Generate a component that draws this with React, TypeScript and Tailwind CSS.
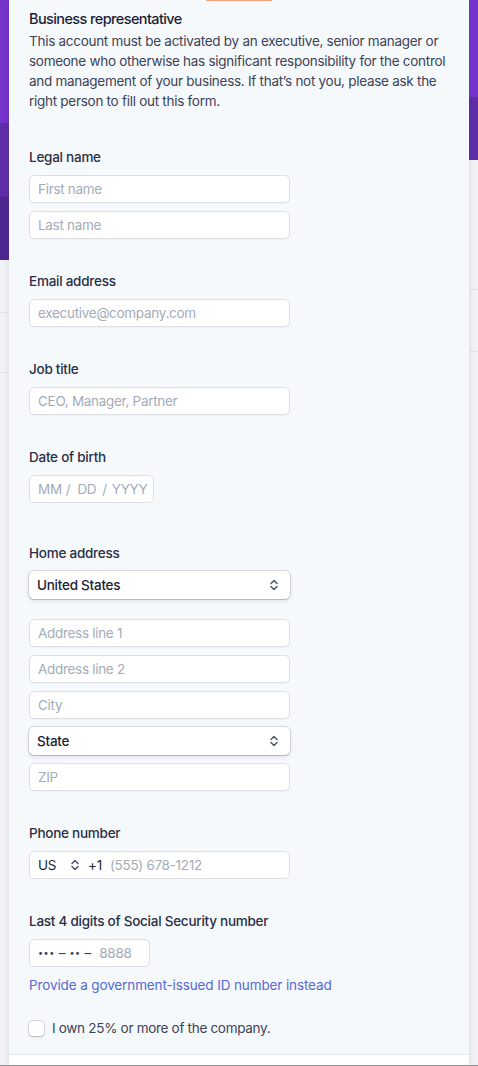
import React from 'react';

const font = { fontFamily: 'Inter, "Noto Sans", "Liberation Sans", sans-serif' };

const Chevrons: React.FC = () => (
  <svg width="8" height="12" viewBox="0 0 8 12" fill="none" className="shrink-0">
    <path d="M1 4.5L4 1.5L7 4.5M1 7.5L4 10.5L7 7.5" stroke="#4f566b" strokeWidth="1.5" strokeLinecap="round" strokeLinejoin="round" />
  </svg>
);

const Field: React.FC<{ placeholder: string }> = ({ placeholder }) => (
  <div className="w-[261px] h-[28px] flex items-center px-2 bg-white rounded-[5px] border border-[#dcdfe6] shadow-[0_1px_1px_rgba(0,0,0,0.03)] text-[13.5px] tracking-[-0.3px] text-[#a3acb9]">
    {placeholder}
  </div>
);

const Select: React.FC<{ value: string }> = ({ value }) => (
  <div className="w-[261px] h-[28px] flex items-center justify-between pl-2 pr-[12px] bg-white rounded-[5px] shadow-[0_0_0_1px_rgba(60,66,87,0.16),0_2px_5px_rgba(60,66,87,0.12),0_1px_1px_rgba(0,0,0,0.12)] text-[13.5px] tracking-[-0.25px] font-medium text-[#1a1f36]">
    <span>{value}</span>
    <Chevrons />
  </div>
);

const Label: React.FC<{ children: React.ReactNode }> = ({ children }) => (
  <div className="text-[13.5px] tracking-[-0.25px] leading-5 font-medium text-[#2a2f45] mb-2">{children}</div>
);

export default function App() {
  return (
    <div className="relative w-[478px] h-[1066px] overflow-hidden bg-[#f1f2f6]" style={font}>
      {/* background bands */}
      <div className="absolute inset-0 pointer-events-none">
        <div className="absolute left-0 top-0 w-full h-[200px] bg-[#7535cd]" />
        <div className="absolute left-[-40px] top-[122px] w-[120px] h-[76px] bg-[#5f2da8] -skew-y-3" />
        <div className="absolute left-[-40px] top-[196px] w-[120px] h-[64px] bg-[#4e2690] -skew-y-3" />
        <div className="absolute right-0 top-[97px] w-[40px] h-[63px] bg-[#5f2da8]" />
        <div className="absolute right-0 top-[160px] w-[40px] h-[60px] bg-[#f1f2f6]" />
        <div className="absolute left-0 top-[260px] w-[40px] h-[20px] bg-[#f1f2f6]" />
        <div className="absolute left-0 top-[312px] w-[30px] h-px bg-[#e2e3ea]" />
        <div className="absolute left-0 top-[372px] w-[30px] h-px bg-[#e2e3ea]" />
        <div className="absolute right-0 top-[289px] w-[30px] h-px bg-[#e2e3ea]" />
        <div className="absolute right-0 top-[351px] w-[30px] h-px bg-[#e2e3ea]" />
      </div>

      <div className="relative mx-[9px] w-[460px] h-[1065px] bg-[#f6f9fc] shadow-[0_0_6px_rgba(50,50,93,0.12)] flex flex-col">
        <div className="ml-[197px] w-[66px] h-px bg-[#f5a076]" />
        <div className="pl-5 pr-5 pt-[6px]">
          <div className="text-[14.5px] tracking-[-0.6px] leading-6 font-medium text-[#1a1f36]">Business representative</div>
          <p className="text-[13.5px] tracking-[-0.28px] leading-5 text-[#3c4257]">
            This account must be activated by an executive, senior manager or someone who otherwise has significant responsibility for the control and management of your business. If that’s not you, please ask the right person to fill out this form.
          </p>

          <div className="mt-9">
            <Label>Legal name</Label>
            <div className="flex flex-col gap-2">
              <Field placeholder="First name" />
              <Field placeholder="Last name" />
            </div>
          </div>

          <div className="mt-8">
            <Label>Email address</Label>
            <Field placeholder="executive@company.com" />
          </div>

          <div className="mt-8">
            <Label>Job title</Label>
            <Field placeholder="CEO, Manager, Partner" />
          </div>

          <div className="mt-8">
            <Label>Date of birth</Label>
            <div className="w-[125px] h-[28px] flex items-center px-2 bg-white rounded-[5px] border border-[#dcdfe6] text-[13.5px] tracking-[-0.3px] text-[#a3acb9]">
              <span>MM</span>
              <span className="ml-[4px]">/</span>
              <span className="ml-[7px]">DD</span>
              <span className="ml-[6px]">/</span>
              <span className="ml-[5px]">YYYY</span>
            </div>
          </div>

          <div className="mt-10">
            <Label>Home address</Label>
            <Select value="United States" />
            <div className="mt-5 flex flex-col gap-2">
              <Field placeholder="Address line 1" />
              <Field placeholder="Address line 2" />
              <Field placeholder="City" />
              <Select value="State" />
              <Field placeholder="ZIP" />
            </div>
          </div>

          <div className="mt-8">
            <Label>Phone number</Label>
            <div className="w-[261px] h-[28px] flex items-center px-2 bg-white rounded-[5px] border border-[#dcdfe6] text-[13.5px] tracking-[-0.3px]">
              <span className="text-[#1a1f36]">US</span>
              <span className="ml-[15px]"><Chevrons /></span>
              <span className="ml-[9px] text-[#1a1f36]">+1</span>
              <span className="ml-[8px] text-[#a3acb9]">(555) 678-1212</span>
            </div>
          </div>

          <div className="mt-8">
            <Label>Last 4 digits of Social Security number</Label>
            <div className="w-[121px] h-[28px] flex items-center px-2 bg-white rounded-[5px] border border-[#dcdfe6] text-[13.5px]">
              <span className="text-[#3c4257] flex items-center">
                <span className="text-[9px] tracking-[0.5px]">•••</span>
                <span className="ml-[4px]">–</span>
                <span className="ml-[4px] text-[9px] tracking-[0.5px]">••</span>
                <span className="ml-[4px]">–</span>
              </span>
              <span className="ml-[8px] text-[#a3acb9] tracking-[-0.3px]">8888</span>
            </div>
            <div className="mt-2 text-[13.5px] tracking-[-0.12px] leading-5 text-[#5469d4]">Provide a government-issued ID number instead</div>
          </div>

          <div className="mt-[23px] flex items-center gap-2 pb-4">
            <div className="w-[15px] h-[15px] rounded-[4px] bg-white shadow-[0_0_0_1px_rgba(60,66,87,0.16),0_2px_5px_rgba(60,66,87,0.08),0_1px_1px_rgba(0,0,0,0.12)]" />
            <span className="text-[13.5px] tracking-[-0.3px] leading-5 text-[#3c4257]">I own 25% or more of the company.</span>
          </div>
        </div>
        <div className="flex-1 bg-white border-t border-[#e3e8ee]" />
      </div>
      <div className="relative h-px w-full bg-[#8d8d8d]" />
    </div>
  );
}
